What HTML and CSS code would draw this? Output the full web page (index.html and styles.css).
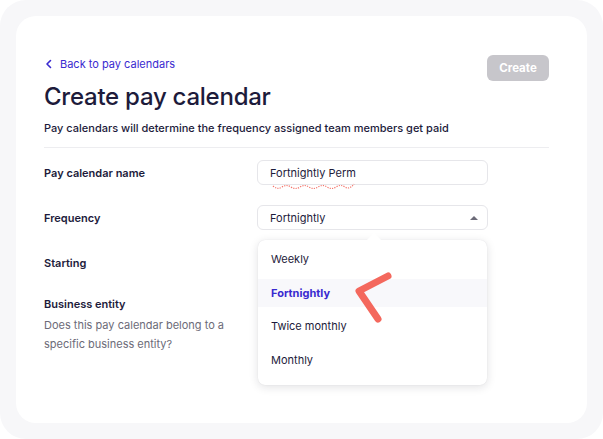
FILE: index.html
```html
<!DOCTYPE html>
<html>
<head>
<meta charset="utf-8">
<link rel="stylesheet" href="styles.css">
</head>
<body>
<div class="frame">
  <div class="card">
    <div class="header">
      <div class="heading">
        <a class="back" href="#">
          <svg width="8" height="10" viewBox="0 0 8 10"><path d="M5.5 1.5 2 5l3.5 3.5" fill="none" stroke="#3a2ad0" stroke-width="1.6" stroke-linecap="round" stroke-linejoin="round"/></svg>
          <span>Back to pay calendars</span>
        </a>
        <h1 class="title">Create pay calendar</h1>
        <p class="subtitle">Pay calendars will determine the frequency assigned team members get paid</p>
      </div>
      <button class="create">Create</button>
    </div>
    <div class="form">
      <div class="row">
        <div class="label">Pay calendar name</div>
        <div class="control">
          <div class="input">Fortnightly Perm</div>
          <svg class="squiggle" width="84" height="8" viewBox="0 0 84 8"><path d="M1 3 Q5.5 7 10 4 T19 4 T28 4 T37 4 T46 4 T55 4 T64 4 T73 4 T82 1" fill="none" stroke="#f4685d" stroke-width="1.2" stroke-dasharray="1.2 1.2" opacity="0.9"/></svg>
        </div>
      </div>
      <div class="row">
        <div class="label">Frequency</div>
        <div class="control">
          <div class="input select">
            <span>Fortnightly</span>
            <span class="caret"></span>
          </div>
          <div class="menu">
            <div class="notch"></div>
            <div class="item">Weekly</div>
            <div class="item active">Fortnightly</div>
            <div class="item">Twice monthly</div>
            <div class="item">Monthly</div>
            <svg class="mark" width="44" height="56" viewBox="0 0 44 56"><path d="M34 5 L5 20 L24 48" fill="none" stroke="#f4685d" stroke-width="7" stroke-linecap="round" stroke-linejoin="round"/></svg>
          </div>
        </div>
      </div>
      <div class="row">
        <div class="label">Starting</div>
        <div class="control"><div class="placeholder"></div></div>
      </div>
      <div class="row">
        <div class="label">
          <div>Business entity</div>
          <p class="desc">Does this pay calendar belong to a specific business entity?</p>
        </div>
        <div class="control"></div>
      </div>
    </div>
  </div>
</div>
</body>
</html>
```

FILE: styles.css
```css
* { box-sizing: border-box; }
html, body { margin: 0; padding: 0; background: #ffffff; }
body {
  font-family: Inter, "Noto Sans", "Liberation Sans", sans-serif;
  color: #1d1b3b;
  width: 603px;
  height: 439px;
  overflow: hidden;
}
.frame {
  width: 603px;
  height: 439px;
  background: #f7f7f9;
  border-radius: 26px;
  padding: 16px;
}
.card {
  background: #ffffff;
  border-radius: 20px;
  height: 407px;
  width: 571px;
  padding: 40px 38px 0 28px;
}
.header {
  display: flex;
  justify-content: space-between;
  align-items: flex-start;
  border-bottom: 1px solid #ededf0;
  padding-bottom: 11px;
}
.back {
  display: flex;
  align-items: center;
  gap: 7px;
  color: #3a2ad0;
  text-decoration: none;
  font-size: 11px;
  line-height: 16px;
  height: 16px;
  margin-left: 1px;
}
.title {
  margin: 9px 0 0 0;
  font-size: 24px;
  line-height: 32px;
  font-weight: 500;
  letter-spacing: -0.25px;
  color: #1d1b3b;
}
.subtitle {
  margin: 7px 0 0 0;
  font-size: 11px;
  line-height: 16px;
  font-weight: 500;
  color: #1d1b3b;
}
.create {
  margin-top: -1px;
  width: 62px;
  height: 26px;
  border: none;
  border-radius: 6px;
  background: #c7c6cb;
  color: #ffffff;
  font-family: inherit;
  font-weight: 700;
  font-size: 11.5px;
  padding: 0;
}
.form {
  display: flex;
  flex-direction: column;
  gap: 20px;
  padding-top: 12px;
}
.row {
  display: grid;
  grid-template-columns: 213px 231px;
  align-items: start;
}
.label {
  font-size: 11px;
  font-weight: 600;
  line-height: 16px;
  padding-top: 5px;
  color: #1d1b3b;
}
.row:last-child .label { padding-top: 1px; }
.desc {
  margin: 4px 0 0 0;
  font-weight: 400;
  color: #6c6b78;
  font-size: 11px;
  line-height: 18.5px;
  width: 196px;
}
.control { position: relative; }
.input {
  height: 25px;
  border: 1px solid #e6e6ea;
  border-radius: 6px;
  padding: 0 12px;
  display: flex;
  align-items: center;
  font-size: 11px;
  color: #1d1b3b;
  background: #fff;
}
.squiggle {
  position: absolute;
  left: 15px;
  top: 23px;
}
.select { justify-content: space-between; }
.caret {
  width: 0; height: 0;
  border-left: 4px solid transparent;
  border-right: 4px solid transparent;
  border-bottom: 4px solid #6c6b78;
  margin-right: -3px;
}
.placeholder { height: 25px; }
.menu {
  position: absolute;
  top: 35px;
  left: 1px;
  width: 229px;
  background: #fff;
  border-radius: 7px;
  box-shadow: 0 2px 10px rgba(20, 20, 40, 0.13), 0 0 1px rgba(20,20,40,0.12);
  padding: 5px 0 11px 0;
  display: flex;
  flex-direction: column;
  gap: 5.5px;
  z-index: 5;
}
.notch {
  position: absolute;
  top: -5px;
  left: 111px;
  width: 10px;
  height: 10px;
  background: #fff;
  transform: rotate(45deg);
}
.item {
  position: relative;
  height: 28px;
  display: flex;
  align-items: center;
  padding-left: 13px;
  font-size: 11px;
  color: #1d1b3b;
}
.item.active {
  background: #f8f8fb;
  color: #3a2ad0;
  font-weight: 700;
}
.mark {
  position: absolute;
  left: 96px;
  top: 31px;
}
```
